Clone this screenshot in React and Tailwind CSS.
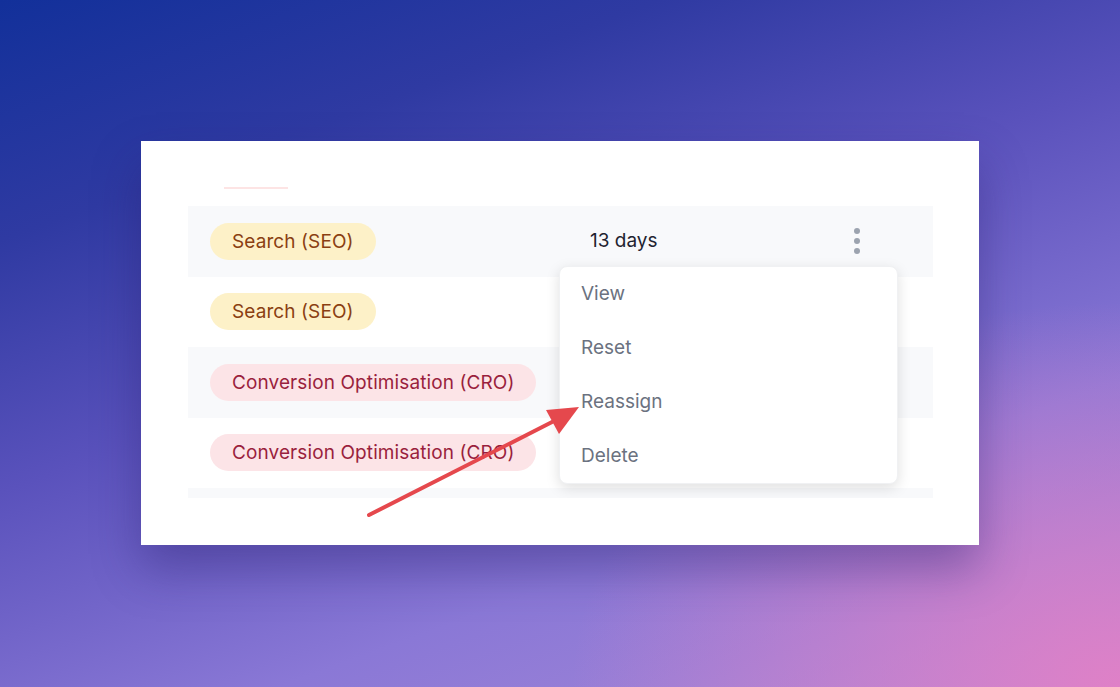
import React from "react";

const rows = [
  { label: "Search (SEO)", tone: "seo", days: "13 days", shaded: true },
  { label: "Search (SEO)", tone: "seo", shaded: false },
  { label: "Conversion Optimisation (CRO)", tone: "cro", shaded: true },
  { label: "Conversion Optimisation (CRO)", tone: "cro", shaded: false },
  { label: "", tone: null, shaded: true },
];

const menuItems = ["View", "Reset", "Reassign", "Delete"];

function Badge({ label, tone }) {
  if (!tone) return null;
  const cls =
    tone === "seo"
      ? "bg-[#fdf1c8] text-[#8a3f12]"
      : "bg-[#fce4e7] text-[#9a1f3d]";
  return (
    <span
      className={`inline-flex items-center h-[37px] px-[22px] rounded-full text-[19px] tracking-[0.1px] leading-none ${cls}`}
    >
      {label}
    </span>
  );
}

export default function App() {
  return (
    <div
      className="relative w-full h-[687px] overflow-hidden flex items-center justify-center bg-[radial-gradient(ellipse_70%_80%_at_100%_100%,rgba(226,128,198,0.95),rgba(226,128,198,0)_70%),linear-gradient(160deg,#12309a_0%,#2f3aa2_22%,#5a52bc_45%,#8a78d6_72%,#a888d8_100%)]"
      style={{ fontFamily: "Inter, 'Noto Sans', sans-serif" }}
    >
      <div className="w-[838px] h-[404px] -mt-px bg-white shadow-[0_24px_44px_rgba(40,30,110,0.4)] pl-[47px] pr-[46px] pt-[46px]">
        <div className="ml-[36px] w-[64px] h-[2px] bg-[#fde4e4]" />
        <div className="relative mt-[17px] h-[292px] overflow-hidden">
          {rows.map((row, i) => (
            <div
              key={i}
              className={`flex items-center h-[70.5px] pl-[22px] ${
                row.shaded ? "bg-[#f8f9fb]" : "bg-white"
              }`}
            >
              <div className="w-[380px]">
                <Badge label={row.label} tone={row.tone} />
              </div>
              <div className="w-[240px] text-[19px] text-[#1f2430]">
                {row.days || ""}
              </div>
              {row.days && (
                <div className="ml-[24px] flex flex-col gap-[4px] items-center">
                  <span className="w-[6px] h-[6px] rounded-full bg-[#9ca3af]" />
                  <span className="w-[6px] h-[6px] rounded-full bg-[#9ca3af]" />
                  <span className="w-[6px] h-[6px] rounded-full bg-[#9ca3af]" />
                </div>
              )}
            </div>
          ))}

          {/* dropdown menu */}
          <div className="absolute top-[60px] left-[371px] w-[339px] bg-white rounded-lg shadow-[0_4px_14px_rgba(0,0,0,0.13)] border border-[#f0f1f3]">
            {menuItems.map((item) => (
              <div
                key={item}
                className="h-[54px] flex items-center px-[21px] text-[19px] text-[#6b7280]"
              >
                {item}
              </div>
            ))}
          </div>
        </div>
      </div>

      {/* annotation arrow */}
      <svg
        className="absolute left-0 top-0 pointer-events-none"
        width="1120"
        height="687"
        viewBox="0 0 1120 687"
      >
        <line
          x1="369"
          y1="515"
          x2="556"
          y2="420"
          stroke="#e5484d"
          strokeWidth="4"
          strokeLinecap="round"
        />
        <polygon points="579,407 546,410 559,434" fill="#e5484d" />
      </svg>
    </div>
  );
}
